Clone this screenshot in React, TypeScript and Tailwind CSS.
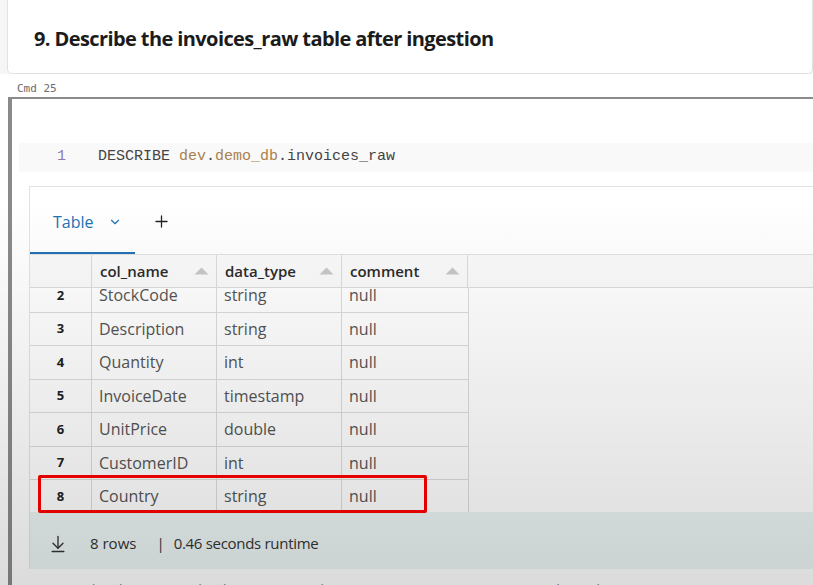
import { ChevronDown, Plus, ArrowDownToLine } from "lucide-react"

const rows = [
  { n: 2, name: "StockCode", type: "string" },
  { n: 3, name: "Description", type: "string" },
  { n: 4, name: "Quantity", type: "int" },
  { n: 5, name: "InvoiceDate", type: "timestamp" },
  { n: 6, name: "UnitPrice", type: "double" },
  { n: 7, name: "CustomerID", type: "int" },
  { n: 8, name: "Country", type: "string" },
]

function SortUp() {
  return (
    <svg width="15" height="8" viewBox="0 0 15 8" className="shrink-0">
      <path d="M0.5 7.5 L7.5 0.5 L14.5 7.5 Z" fill="#c8c8c8" />
    </svg>
  )
}

function HeaderCell({ label, w }: { label: string; w: string }) {
  return (
    <div className={`${w} flex h-full items-center justify-between border-r border-[#dcdcdc] pl-[8px] pr-[7px]`}>
      <span className="text-[15px] font-semibold text-[#2b2b2b]">{label}</span>
      <SortUp />
    </div>
  )
}

export default function App() {
  return (
    <div
      className="relative h-[585px] w-[813px] overflow-hidden bg-[#f6f6f6]"
      style={{ fontFamily: '"Open Sans", "Noto Sans", sans-serif' }}
    >
      {/* markdown cell */}
      <div className="ml-[7px] -mt-[10px] h-[84px] rounded-b-[5px] border border-[#e2e2e2] bg-white pl-[26px] pt-[33px]">
        <h2 className="text-[20px] font-bold tracking-[-0.6px] text-[#1b1b1b]">
          9. Describe the invoices_raw table after ingestion
        </h2>
      </div>

      <div className="bg-white pt-[8px]">
        <div className="pl-[17px] text-[11px] leading-[13px] text-[#6b6b6b]" style={{ fontFamily: '"DejaVu Sans Mono", monospace' }}>
          Cmd 25
        </div>

        {/* code cell */}
        <div className="ml-[8px] mt-[2px] border-l-[4px] border-t-[2px] border-[#8a8a8a] bg-white pt-[44px]">
          <div
            className="ml-[7px] flex h-[29px] items-center whitespace-pre bg-[#f9f9f9] text-[15px]"
            style={{ fontFamily: '"Liberation Mono", monospace' }}
          >
            <span className="w-[79px] pl-[38px] text-[#8d7bb0]">1</span>
            <span className="text-[#444]">DESCRIBE </span>
            <span className="text-[#a8814f]">dev</span>
            <span className="text-[#444]">.</span>
            <span className="text-[#a8814f]">demo_db</span>
            <span className="text-[#444]">.invoices_raw</span>
          </div>

          {/* result */}
          <div className="ml-[17px] mt-[14px] border-l border-t border-[#e3e3e3]">
            <div className="flex h-[68px] items-stretch border-b border-[#e0e0e0]">
              <div className="flex w-[105px] items-center gap-[14px] border-b-[2px] border-[#2272b4] pl-[23px] pt-[5px]">
                <span className="text-[16px] text-[#2272b4]">Table</span>
                <ChevronDown size={14} strokeWidth={2} className="text-[#2272b4]" />
              </div>
              <div className="flex items-center pl-[17px] pt-[2px]">
                <Plus size={19} strokeWidth={1.6} className="text-[#222]" />
              </div>
            </div>

            <div className="flex h-[33px] items-center border-b border-[#dcdcdc] bg-[#fafafa]">
              <div className="h-full w-[62px] border-r border-[#dcdcdc]" />
              <HeaderCell label="col_name" w="w-[125px]" />
              <HeaderCell label="data_type" w="w-[125px]" />
              <HeaderCell label="comment" w="w-[126px]" />
            </div>

            {/* body, scrolled a little so row 2 sits under the header */}
            <div className="h-[224px] overflow-hidden">
              <div className="-mt-[9px] w-[439px]">
                {rows.map((r) => (
                  <div
                    key={r.n}
                    className="flex h-[33.5px] items-center border-b border-r border-[#dcdcdc] bg-white text-[16px] text-[#555]"
                  >
                    <div className="flex h-full w-[62px] items-center justify-center border-r border-[#dcdcdc] text-[13px] font-bold text-[#222]">
                      {r.n}
                    </div>
                    <div className="flex h-full w-[125px] items-center border-r border-[#dcdcdc] pl-[7px]">{r.name}</div>
                    <div className="flex h-full w-[125px] items-center border-r border-[#dcdcdc] pl-[7px]">{r.type}</div>
                    <div className="flex h-full w-[126px] items-center pl-[7px]">null</div>
                  </div>
                ))}
              </div>
            </div>

            <div className="flex h-[57px] items-center bg-[#ecf4f4] pl-[18px] pt-[6px] text-[15px] text-[#333]">
              <ArrowDownToLine size={20} strokeWidth={1.6} className="text-[#333]" />
              <span className="ml-[22px]">8 rows</span>
              <span className="ml-[20px]">|</span>
              <span className="ml-[9px] tracking-[-0.3px]">0.46 seconds runtime</span>
            </div>
          </div>

          <div className="pl-[20px] pt-[11px] text-[13px] text-[#777]">
            Command took 0.46 seconds -- by user@example.com at 10/10/2023, 10:10:55 PM on demo cluster
          </div>
        </div>
      </div>

      {/* red highlight around the last row */}
      <div className="absolute left-[38px] top-[475px] h-[38px] w-[389px] rounded-[2px] border-[3px] border-[#ff0000]" />

      {/* screen capture dimming */}
      <div className="pointer-events-none absolute inset-x-0 bottom-0 top-[200px] bg-linear-to-b from-transparent to-black/[0.14]" />
    </div>
  )
}
